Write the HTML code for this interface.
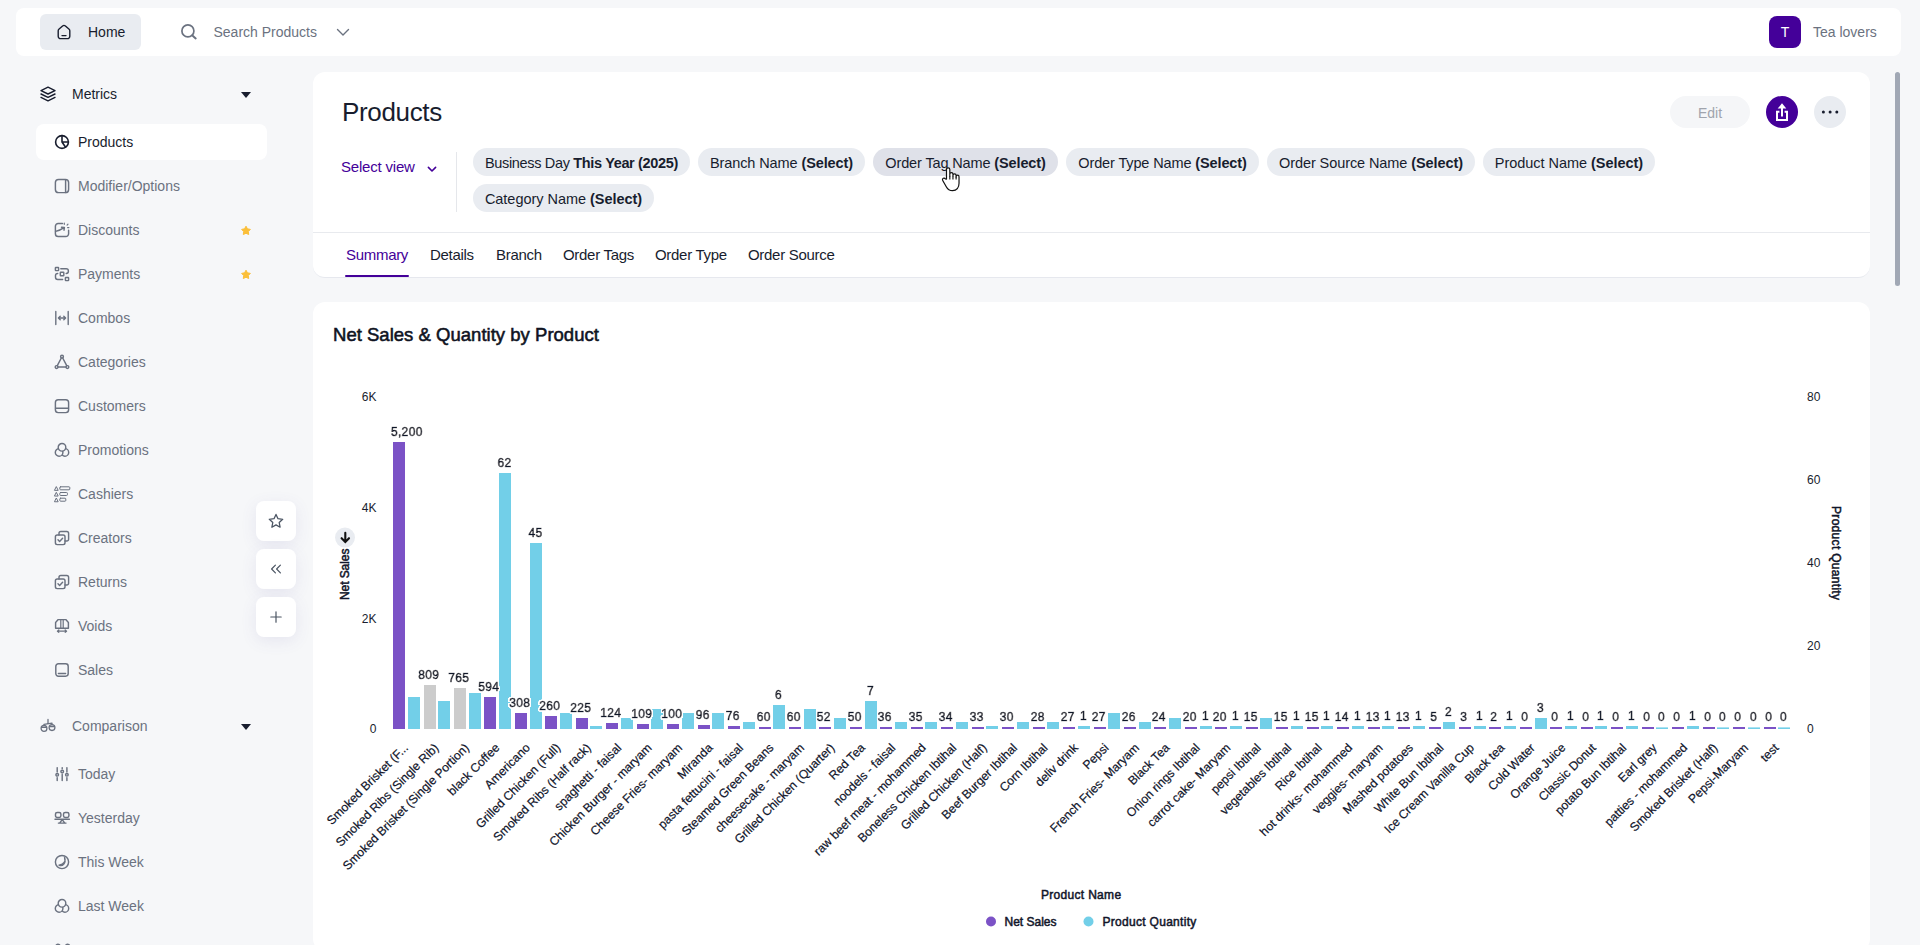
<!DOCTYPE html>
<html lang="en"><head><meta charset="utf-8"><title>Products</title>
<style>
*{box-sizing:border-box;margin:0;padding:0}
html,body{width:1920px;height:945px;overflow:hidden}
body{background:#f6f7f9;font-family:"Liberation Sans",Arial,sans-serif;color:#181d2e;position:relative;font-size:14px}
.abs{position:absolute}
svg{display:block;overflow:visible}
/* top bar */
#topbar{position:absolute;left:16px;top:8px;width:1885px;height:48px;background:#fff;border-radius:8px}
#home{position:absolute;left:24px;top:6px;width:101px;height:36px;background:#e9ecf1;border-radius:6px}
#home svg{position:absolute;left:16px;top:10px}
#home span{position:absolute;left:48px;top:0;line-height:36px;font-size:14px;color:#181d2e}
#search-ic{position:absolute;left:164px;top:15px}
#search-tx{position:absolute;left:197.500px;top:0;line-height:48px;font-size:14px;color:#6b7280}
#search-ch{position:absolute;left:320px;top:19.700px}
#avatar{position:absolute;left:1753px;top:8px;width:32px;height:32px;border-radius:8px;background:#440099;color:#fff;font-size:14px;line-height:32px;text-align:center}
#uname{position:absolute;left:1797px;top:0;line-height:48px;font-size:14px;color:#6b7280}
/* sidebar */
.sec{position:absolute;left:36px;width:231px;height:36px}
.sec svg.ic{position:absolute;left:4px;top:10px}
.sec span{position:absolute;left:36px;top:0;line-height:36px;font-size:14px}
.sec i.caret{position:absolute;left:205px;top:16px;width:0;height:0;border-left:5px solid transparent;border-right:5px solid transparent;border-top:6px solid #181d2e}
.item{position:absolute;left:36px;width:231px;height:36px;border-radius:8px;color:#6b7280}
.item.active{background:#fff;color:#181d2e}
.item svg.ic{position:absolute;left:18px;top:10px}
.item span{position:absolute;left:42px;top:0;line-height:36px;font-size:14px}
.item svg.star{position:absolute;left:204px;top:12px}
.fbtn{position:absolute;left:256px;width:40px;height:40px;border-radius:8px;background:#fff;box-shadow:0 4px 16px rgba(90,80,160,.10)}
.fbtn svg{position:absolute;left:12px;top:12px}
/* cards */
#card1{position:absolute;left:313px;top:72px;width:1557px;height:205.500px;background:#fff;border-radius:12px;overflow:hidden;border-bottom:1px solid #e6e8ee}
#card2{position:absolute;left:313px;top:302px;width:1557px;height:649px;background:#fff;border-radius:12px}
#ptitle{font-weight:normal;position:absolute;left:29px;top:22px;font-size:26px;line-height:36px;color:#181d2e;letter-spacing:-.35px}
#edit{padding-top:1px;position:absolute;left:1357px;top:24px;width:80px;height:32px;border-radius:16px;background:#f5f6f8;color:#a0a4ad;font-size:14px;line-height:32px;text-align:center}
#share{position:absolute;left:1453px;top:24px;width:32px;height:32px;border-radius:16px;background:#440099}
#share svg{position:absolute;left:0;top:0}
#more{position:absolute;left:1501px;top:24px;width:32px;height:32px;border-radius:16px;background:#e9ecf1}
#more i{position:absolute;top:14.500px;width:2.800px;height:2.800px;border-radius:50%;background:#181d2e}
#selview{position:absolute;left:28px;top:84px;font-size:15px;line-height:22px;color:#440099;letter-spacing:-.2px}
#selview-ch{position:absolute;left:114px;top:93.500px}
#vdiv{position:absolute;left:143px;top:80px;width:1px;height:60px;background:#e5e7eb}
.chip{position:absolute;padding-top:1px;height:28px;border-radius:14px;background:#e9ecf1;font-size:14.5px;line-height:28px;text-align:center;color:#181d2e;white-space:nowrap;letter-spacing:0}
.chip b{font-weight:bold;-webkit-text-stroke:0}
.chip.hov{background:#dfe1e9}
#hdiv{position:absolute;left:0;top:160px;width:1557px;height:1px;background:#e8eaee}
.tab{position:absolute;top:172px;font-size:15px;line-height:22px;color:#181d2e;white-space:nowrap;letter-spacing:-.3px}
.tab.on{color:#440099}
#tabline{position:absolute;left:32px;top:202.500px;width:64px;height:2.500px;background:#440099;border-radius:1px}
#scroll{position:absolute;left:1895px;top:72px;width:5px;height:214px;border-radius:3px;background:#a1a8b5}
#ctitle{position:absolute;left:20px;top:21px;font-size:18.500px;line-height:24px;font-weight:normal;color:#0f1322;-webkit-text-stroke:.55px #0f1322;letter-spacing:.02px;white-space:nowrap}
#chart{position:absolute;left:0;top:0}
#cursor{position:absolute;left:939.800px;top:166.100px}

</style></head>
<body>
<div id="topbar">
  <div id="home"><svg class="" width="16" height="16" viewBox="0 0 16 16" fill="none" stroke="#181d2e" stroke-width="1.4" stroke-linecap="round" stroke-linejoin="round"><path d="M2.200 6.800c0-.8.300-1.300.900-1.800L6.600 2c.800-.7 2-.7 2.800 0l3.500 3c.6.500.9 1 .9 1.800v5.400a2.400 2.400 0 0 1-2.400 2.400H4.600a2.400 2.400 0 0 1-2.400-2.400zM6 11.600h4"/></svg><span>Home</span></div>
  <div id="search-ic"><svg class="" width="18" height="18" viewBox="0 0 18 18" fill="none" stroke="#6b7280" stroke-width="1.7" stroke-linecap="round" stroke-linejoin="round"><circle cx="7.900" cy="7.900" r="6"/><path d="M12.400 12.400l3.300 3" stroke-width="2"/></svg></div>
  <div id="search-tx">Search Products</div>
  <div id="search-ch"><svg class="" width="14" height="9" viewBox="0 0 14 9" fill="none" stroke="#6b7280" stroke-width="1.4" stroke-linecap="round" stroke-linejoin="round"><path d="M1.500 1.500L7 7l5.500-5.500"/></svg></div>
  <div id="avatar">T</div>
  <div id="uname">Tea lovers</div>
</div>
<nav id="sidebar">
<div class="sec" style="top:76px;color:#181d2e"><svg class="ic" width="16" height="16" viewBox="0 0 16 16" fill="none" stroke="#181d2e" stroke-width="1.4" stroke-linecap="round" stroke-linejoin="round"><path d="M8 1.200L15 4.600 8 8 1 4.600z"/><path d="M1 8l7 3.400L15 8M1 11.400l7 3.400 7-3.400"/></svg><span>Metrics</span><i class="caret"></i></div>
<div class="sec" style="top:708px;color:#6b7280"><svg class="ic" width="16" height="16" viewBox="0 0 16 16" fill="none" stroke="#6b7280" stroke-width="1.3" stroke-linecap="round" stroke-linejoin="round"><path d="M8 1.400v4.300M4 6.300l8-1.100M4 6.300v1.200M12 5.200v1.400"/><circle cx="4" cy="10.400" r="2.900"/><circle cx="12" cy="9.600" r="2.900"/><path d="M1.600 9.300h4.800M9.600 8.500h4.800"/></svg><span>Comparison</span><i class="caret"></i></div>
<div class="item active" style="top:124px"><svg class="ic" width="16" height="16" viewBox="0 0 16 16" fill="none" stroke="#181d2e" stroke-width="1.6" stroke-linecap="round" stroke-linejoin="round"><circle cx="8" cy="8" r="6.4"/><path d="M8 1.6V8H14.4M8 8l3.6 5.2"/></svg><span>Products</span></div>
<div class="item" style="top:168px"><svg class="ic" width="16" height="16" viewBox="0 0 16 16" fill="none" stroke="#6b7280" stroke-width="1.45" stroke-linecap="round" stroke-linejoin="round"><rect x="1.400" y="1.400" width="13.200" height="13.200" rx="3.200"/><path d="M11.600 1.600v12.800"/></svg><span>Modifier/Options</span></div>
<div class="item" style="top:212px"><svg class="ic" width="16" height="16" viewBox="0 0 16 16" fill="none" stroke="#6b7280" stroke-width="1.45" stroke-linecap="round" stroke-linejoin="round"><path d="M8.500 1.500H4.200A2.800 2.800 0 0 0 1.400 4.300v7.400a2.800 2.800 0 0 0 2.800 2.800h7.600a2.800 2.800 0 0 0 2.800-2.800V8.300"/><path d="M1.600 9.400C4.500 8.800 7.400 7.600 10 5.700M7.500 5.200l2.900.200-.400 2.800"/><path d="M10.300 1v1.300M14 2.100l-.900 1M14.900 5.600h-1.300" stroke-width="1.200"/></svg><span>Discounts</span><svg class="star" width="12" height="12" viewBox="0 0 12 12"><path d="M6.00 2.20L7.44 4.82L10.37 5.38L8.33 7.56L8.70 10.52L6.00 9.25L3.30 10.52L3.67 7.56L1.63 5.38L4.56 4.82z" fill="#fbbf3a" stroke="#fbbf3a" stroke-width="1" stroke-linejoin="round"/></svg></div>
<div class="item" style="top:256px"><svg class="ic" width="16" height="16" viewBox="0 0 16 16" fill="none" stroke="#6b7280" stroke-width="1.45" stroke-linecap="round" stroke-linejoin="round"><rect x="1.400" y="1.400" width="3.200" height="3.200" rx=".5"/><rect x="11.400" y="11.400" width="3.200" height="3.200" rx=".5"/><rect x="6.300" y="6.300" width="3.500" height="3.500" rx=".5"/><path d="M6.800 2.700h5.400a2.200 2.200 0 0 1 2.200 2.200v.300a2.200 2.200 0 0 1-2.200 2.200M3.700 7.400a2.200 2.200 0 0 0-2.200 2.200v1.600a2.200 2.200 0 0 0 2.200 2.200h4.900"/></svg><span>Payments</span><svg class="star" width="12" height="12" viewBox="0 0 12 12"><path d="M6.00 2.20L7.44 4.82L10.37 5.38L8.33 7.56L8.70 10.52L6.00 9.25L3.30 10.52L3.67 7.56L1.63 5.38L4.56 4.82z" fill="#fbbf3a" stroke="#fbbf3a" stroke-width="1" stroke-linejoin="round"/></svg></div>
<div class="item" style="top:300px"><svg class="ic" width="16" height="16" viewBox="0 0 16 16" fill="none" stroke="#6b7280" stroke-width="1.45" stroke-linecap="round" stroke-linejoin="round"><path d="M1.800 1.400v13.200M14.200 1.400v13.200M4.600 8h6.800M6.200 6.200L4.400 8l1.800 1.800M9.800 6.200L11.600 8 9.800 9.800" stroke-width="1.400"/></svg><span>Combos</span></div>
<div class="item" style="top:344px"><svg class="ic" width="16" height="16" viewBox="0 0 16 16" fill="none" stroke="#6b7280" stroke-width="1.45" stroke-linecap="round" stroke-linejoin="round"><circle cx="8" cy="2.700" r="1.400"/><circle cx="2.600" cy="13" r="1.400"/><circle cx="13.400" cy="13" r="1.400"/><path d="M7.300 4L3.300 11.700M8.700 4l4 7.700M4 13h8"/></svg><span>Categories</span></div>
<div class="item" style="top:388px"><svg class="ic" width="16" height="16" viewBox="0 0 16 16" fill="none" stroke="#6b7280" stroke-width="1.45" stroke-linecap="round" stroke-linejoin="round"><rect x="1.400" y="1.800" width="13.200" height="12.800" rx="2.800"/><path d="M1.600 10.200h12.800"/></svg><span>Customers</span></div>
<div class="item" style="top:432px"><svg class="ic" width="16" height="16" viewBox="0 0 16 16" fill="none" stroke="#6b7280" stroke-width="1.45" stroke-linecap="round" stroke-linejoin="round"><g fill="#f6f7f9"><circle cx="10.900" cy="10.400" r="3.800"/><circle cx="5.100" cy="10.400" r="3.800"/><circle cx="8" cy="5.300" r="3.800"/></g></svg><span>Promotions</span></div>
<div class="item" style="top:476px"><svg class="ic" width="16" height="16" viewBox="0 0 16 16" fill="none" stroke="#6b7280" stroke-width="1.45" stroke-linecap="round" stroke-linejoin="round"><g stroke-width="1"><rect x="5.800" y=".800" width="10" height="3" rx=".8"/><rect x="5.800" y="6.500" width="7.600" height="3" rx=".8"/><rect x="5.800" y="12.200" width="6" height="3" rx=".8"/><path d="M.600 4l1.700-3.400L4 4zM.600 9.700l1.700-3.400L4 9.700zM.600 15.400l1.700-3.400L4 15.400z"/></g></svg><span>Cashiers</span></div>
<div class="item" style="top:520px"><svg class="ic" width="16" height="16" viewBox="0 0 16 16" fill="none" stroke="#6b7280" stroke-width="1.45" stroke-linecap="round" stroke-linejoin="round"><rect x="1.400" y="5" width="9.600" height="9.600" rx="1.800"/><path d="M5 5V3.200A1.800 1.800 0 0 1 6.800 1.400h6A1.800 1.800 0 0 1 14.600 3.200v6A1.800 1.800 0 0 1 12.800 11H11M4 9.800l1.600 1.600 3-3.200"/></svg><span>Creators</span></div>
<div class="item" style="top:564px"><svg class="ic" width="16" height="16" viewBox="0 0 16 16" fill="none" stroke="#6b7280" stroke-width="1.45" stroke-linecap="round" stroke-linejoin="round"><rect x="1.400" y="5" width="9.600" height="9.600" rx="1.800"/><path d="M5 5V3.200A1.800 1.800 0 0 1 6.800 1.400h6A1.800 1.800 0 0 1 14.600 3.200v6A1.800 1.800 0 0 1 12.800 11H11M4 9.800l1.600 1.600 3-3.200"/></svg><span>Returns</span></div>
<div class="item" style="top:608px"><svg class="ic" width="16" height="16" viewBox="0 0 16 16" fill="none" stroke="#6b7280" stroke-width="1.45" stroke-linecap="round" stroke-linejoin="round"><path d="M1.600 10.200V4.400l2.600-2.800h7.600l2.600 2.800v5.800z"/><path d="M6.800 1.800v8.200M9.200 1.800v8.200M3.400 13.200h9.200M4.800 12l-1.400 1.200 1.400 1.200M11.200 12l1.400 1.200-1.400 1.200" stroke-width="1.200"/></svg><span>Voids</span></div>
<div class="item" style="top:652px"><svg class="ic" width="16" height="16" viewBox="0 0 16 16" fill="none" stroke="#6b7280" stroke-width="1.45" stroke-linecap="round" stroke-linejoin="round"><rect x="1.800" y="1.800" width="12.400" height="12.400" rx="2.600"/><path d="M4.400 11.400h7.200"/></svg><span>Sales</span></div>
<div class="item" style="top:756px"><svg class="ic" width="16" height="16" viewBox="0 0 16 16" fill="none" stroke="#6b7280" stroke-width="1.45" stroke-linecap="round" stroke-linejoin="round"><path d="M3.200 1.600v4.400M3.200 11.600v2.800M8.200 1.600v1.200M8.200 8.400v6M12.900 1.600v4.400M12.900 11.600v2.800"/><circle cx="3.200" cy="8.800" r="1.300"/><circle cx="8.200" cy="5.600" r="1.300"/><circle cx="12.900" cy="8.800" r="1.300"/></svg><span>Today</span></div>
<div class="item" style="top:800px"><svg class="ic" width="16" height="16" viewBox="0 0 16 16" fill="none" stroke="#6b7280" stroke-width="1.45" stroke-linecap="round" stroke-linejoin="round"><rect x="1.500" y="2.400" width="5.400" height="5" rx="1.700"/><rect x="9.500" y="2.400" width="5.400" height="5" rx="1.700"/><path d="M1 9.300h14.400M8.200 9.600l-2.600 3.500h5.200zM4.400 13.100h7.600"/></svg><span>Yesterday</span></div>
<div class="item" style="top:844px"><svg class="ic" width="16" height="16" viewBox="0 0 16 16" fill="none" stroke="#6b7280" stroke-width="1.45" stroke-linecap="round" stroke-linejoin="round"><circle cx="8" cy="8" r="6.600"/><path d="M10.600 3.800c1.200 2.600.2 6.400-5.600 7.400 3.600 1.600 7.400-2.200 5.600-7.400z"/></svg><span>This Week</span></div>
<div class="item" style="top:888px"><svg class="ic" width="16" height="16" viewBox="0 0 16 16" fill="none" stroke="#6b7280" stroke-width="1.45" stroke-linecap="round" stroke-linejoin="round"><g fill="#f6f7f9"><circle cx="10.900" cy="10.400" r="3.800"/><circle cx="5.100" cy="10.400" r="3.800"/><circle cx="8" cy="5.300" r="3.800"/></g></svg><span>Last Week</span></div>
<div class="item" style="top:933px"><svg class="ic" width="16" height="16" viewBox="0 0 16 16" fill="none" stroke="#6b7280" stroke-width="1.45" stroke-linecap="round" stroke-linejoin="round"><circle cx="4" cy="3.200" r="2"/><circle cx="13.600" cy="3.200" r="2"/><path d="M6 3.200h5.600M4 5.200v6M13.600 5.200v6"/></svg><span style="top:8px"></span></div>
</nav>
<div class="fbtn" style="top:501px"><svg class="" width="16" height="16" viewBox="0 0 16 16" fill="none" stroke="#4b5563" stroke-width="1.3" stroke-linecap="round" stroke-linejoin="round"><path d="M8 1.400l2 4.300 4.700.6-3.500 3.200.9 4.700L8 11.900l-4.100 2.300.9-4.700L1.300 6.300l4.700-.6z"/></svg></div>
<div class="fbtn" style="top:549px"><svg class="" width="16" height="16" viewBox="0 0 16 16" fill="none" stroke="#4b5563" stroke-width="1.2" stroke-linecap="round" stroke-linejoin="round"><path d="M7.400 4.200L3.600 8l3.800 3.800M12.400 4.200L8.600 8l3.800 3.800"/></svg></div>
<div class="fbtn" style="top:597px"><svg class="" width="16" height="16" viewBox="0 0 16 16" fill="none" stroke="#4b5563" stroke-width="1.2" stroke-linecap="round" stroke-linejoin="round"><path d="M8 2.800v10.400M2.800 8h10.400"/></svg></div>
<section id="card1">
  <h1 id="ptitle">Products</h1>
  <div id="edit">Edit</div>
  <div id="share"><svg width="32" height="32" viewBox="0 0 32 32" fill="none" stroke="#fff" stroke-width="2"><path d="M13.400 15.800H11v8.200h10v-8.200h-2.400M16 20.500v-9" stroke-linejoin="miter"/><path d="M16 7.200l4.300 5.400h-8.600z" fill="#fff" stroke="none"/></svg></div>
  <div id="more"><svg width="32" height="32" viewBox="0 0 32 32"><circle cx="9.400" cy="15.900" r="1.500" fill="#181d2e"/><circle cx="16.100" cy="15.900" r="1.500" fill="#181d2e"/><circle cx="22.800" cy="15.900" r="1.500" fill="#181d2e"/></svg></div>
  <div id="selview">Select view</div>
  <div id="selview-ch"><svg class="" width="10" height="7" viewBox="0 0 10 7" fill="none" stroke="#440099" stroke-width="1.6" stroke-linecap="round" stroke-linejoin="round"><path d="M1.400 1.400L5 5l3.600-3.600"/></svg></div>
  <div id="vdiv"></div>
  <div class="chip" style="left:160px;top:76px;width:217px;letter-spacing:-0.341px">Business Day <b>This Year (2025)</b></div>
  <div class="chip" style="left:385px;top:76px;width:167px;letter-spacing:-0.105px">Branch Name <b>(Select)</b></div>
  <div class="chip hov" style="left:560px;top:76px;width:185px;letter-spacing:-0.13px">Order Tag Name <b>(Select)</b></div>
  <div class="chip" style="left:753px;top:76px;width:193px;letter-spacing:-0.125px">Order Type Name <b>(Select)</b></div>
  <div class="chip" style="left:954px;top:76px;width:208px;letter-spacing:-0.085px">Order Source Name <b>(Select)</b></div>
  <div class="chip" style="left:1170px;top:76px;width:172px;letter-spacing:-0.038px">Product Name <b>(Select)</b></div>
  <div class="chip" style="left:160px;top:112px;width:181px;letter-spacing:-0.032px">Category Name <b>(Select)</b></div>
  <div id="hdiv"></div>
  <div class="tab on" style="left:33px">Summary</div>
  <div class="tab" style="left:117px">Details</div>
  <div class="tab" style="left:183px">Branch</div>
  <div class="tab" style="left:250px">Order Tags</div>
  <div class="tab" style="left:342px">Order Type</div>
  <div class="tab" style="left:435px">Order Source</div>
  <div id="tabline"></div>
</section>
<div id="scroll"></div>
<section id="card2">
  <h2 id="ctitle">Net Sales &amp; Quantity by Product</h2>
  <svg id="chart" width="1557" height="660" viewBox="313 302 1557 660" font-family="Liberation Sans, Arial, sans-serif" font-size="12" fill="#181d2e">
<text x="376.500" y="733.3" text-anchor="end">0</text>
<text x="376.500" y="622.63" text-anchor="end">2K</text>
<text x="376.500" y="511.97" text-anchor="end">4K</text>
<text x="376.500" y="401.3" text-anchor="end">6K</text>
<text x="1807" y="733.3">0</text>
<text x="1807" y="650.3">20</text>
<text x="1807" y="567.3">40</text>
<text x="1807" y="484.3">60</text>
<text x="1807" y="401.3">80</text>
<g><rect x="393" y="442" width="12" height="287" fill="#7b52c6"/><rect x="408" y="697" width="12" height="32" fill="#72cfe8"/><rect x="424" y="685" width="12" height="44" fill="#cccccc"/><rect x="438" y="701" width="12" height="28" fill="#72cfe8"/><rect x="454" y="688" width="12" height="41" fill="#cccccc"/><rect x="469" y="693" width="12" height="36" fill="#72cfe8"/><rect x="484" y="697" width="12" height="32" fill="#7b52c6"/><rect x="499" y="473" width="12" height="256" fill="#72cfe8"/><rect x="515" y="713" width="12" height="16" fill="#7b52c6"/><rect x="530" y="543" width="12" height="186" fill="#72cfe8"/><rect x="545" y="716" width="12" height="13" fill="#7b52c6"/><rect x="560" y="713" width="12" height="16" fill="#72cfe8"/><rect x="576" y="718" width="12" height="11" fill="#7b52c6"/><rect x="590" y="726" width="12" height="3" fill="#72cfe8"/><rect x="606" y="723" width="12" height="6" fill="#7b52c6"/><rect x="621" y="718" width="12" height="11" fill="#72cfe8"/><rect x="637" y="724" width="12" height="5" fill="#7b52c6"/><rect x="651" y="709" width="12" height="20" fill="#72cfe8"/><rect x="667" y="724" width="12" height="5" fill="#7b52c6"/><rect x="682" y="713" width="12" height="16" fill="#72cfe8"/><rect x="698" y="725" width="12" height="4" fill="#7b52c6"/><rect x="712" y="713" width="12" height="16" fill="#72cfe8"/><rect x="728" y="726" width="12" height="3" fill="#7b52c6"/><rect x="743" y="722" width="12" height="7" fill="#72cfe8"/><rect x="759" y="727" width="12" height="2" fill="#7b52c6"/><rect x="773" y="705" width="12" height="24" fill="#72cfe8"/><rect x="789" y="727" width="12" height="2" fill="#7b52c6"/><rect x="804" y="709" width="12" height="20" fill="#72cfe8"/><rect x="819" y="727" width="12" height="2" fill="#7b52c6"/><rect x="834" y="718" width="12" height="11" fill="#72cfe8"/><rect x="850" y="727" width="12" height="2" fill="#7b52c6"/><rect x="865" y="701" width="12" height="28" fill="#72cfe8"/><rect x="880" y="727" width="12" height="2" fill="#7b52c6"/><rect x="895" y="722" width="12" height="7" fill="#72cfe8"/><rect x="911" y="727" width="12" height="2" fill="#7b52c6"/><rect x="925" y="722" width="12" height="7" fill="#72cfe8"/><rect x="941" y="727" width="12" height="2" fill="#7b52c6"/><rect x="956" y="722" width="12" height="7" fill="#72cfe8"/><rect x="972" y="727" width="12" height="2" fill="#7b52c6"/><rect x="986" y="726" width="12" height="3" fill="#72cfe8"/><rect x="1002" y="727" width="12" height="2" fill="#7b52c6"/><rect x="1017" y="722" width="12" height="7" fill="#72cfe8"/><rect x="1033" y="727" width="12" height="2" fill="#7b52c6"/><rect x="1047" y="722" width="12" height="7" fill="#72cfe8"/><rect x="1063" y="727" width="12" height="2" fill="#7b52c6"/><rect x="1078" y="726" width="12" height="3" fill="#72cfe8"/><rect x="1094" y="727" width="12" height="2" fill="#7b52c6"/><rect x="1108" y="713" width="12" height="16" fill="#72cfe8"/><rect x="1124" y="727" width="12" height="2" fill="#7b52c6"/><rect x="1139" y="722" width="12" height="7" fill="#72cfe8"/><rect x="1154" y="727" width="12" height="2" fill="#7b52c6"/><rect x="1169" y="718" width="12" height="11" fill="#72cfe8"/><rect x="1185" y="727" width="12" height="2" fill="#7b52c6"/><rect x="1200" y="726" width="12" height="3" fill="#72cfe8"/><rect x="1215" y="727" width="12" height="2" fill="#7b52c6"/><rect x="1230" y="726" width="12" height="3" fill="#72cfe8"/><rect x="1246" y="727" width="12" height="2" fill="#7b52c6"/><rect x="1260" y="718" width="12" height="11" fill="#72cfe8"/><rect x="1276" y="727" width="12" height="2" fill="#7b52c6"/><rect x="1291" y="726" width="12" height="3" fill="#72cfe8"/><rect x="1307" y="727" width="12" height="2" fill="#7b52c6"/><rect x="1321" y="726" width="12" height="3" fill="#72cfe8"/><rect x="1337" y="727" width="12" height="2" fill="#7b52c6"/><rect x="1352" y="726" width="12" height="3" fill="#72cfe8"/><rect x="1368" y="727" width="12" height="2" fill="#7b52c6"/><rect x="1382" y="726" width="12" height="3" fill="#72cfe8"/><rect x="1398" y="727" width="12" height="2" fill="#7b52c6"/><rect x="1413" y="726" width="12" height="3" fill="#72cfe8"/><rect x="1429" y="727" width="12" height="2" fill="#7b52c6"/><rect x="1443" y="722" width="12" height="7" fill="#72cfe8"/><rect x="1459" y="727" width="12" height="2" fill="#7b52c6"/><rect x="1474" y="726" width="12" height="3" fill="#72cfe8"/><rect x="1489" y="727" width="12" height="2" fill="#7b52c6"/><rect x="1504" y="726" width="12" height="3" fill="#72cfe8"/><rect x="1520" y="727" width="12" height="2" fill="#7b52c6"/><rect x="1535" y="718" width="12" height="11" fill="#72cfe8"/><rect x="1550" y="727" width="12" height="2" fill="#7b52c6"/><rect x="1565" y="726" width="12" height="3" fill="#72cfe8"/><rect x="1581" y="727" width="12" height="2" fill="#7b52c6"/><rect x="1595" y="726" width="12" height="3" fill="#72cfe8"/><rect x="1611" y="727" width="12" height="2" fill="#7b52c6"/><rect x="1626" y="726" width="12" height="3" fill="#72cfe8"/><rect x="1642" y="727" width="12" height="2" fill="#7b52c6"/><rect x="1656" y="727.4" width="12" height="1.6" fill="#72cfe8"/><rect x="1672" y="727" width="12" height="2" fill="#7b52c6"/><rect x="1687" y="726" width="12" height="3" fill="#72cfe8"/><rect x="1703" y="727" width="12" height="2" fill="#7b52c6"/><rect x="1717" y="727.4" width="12" height="1.6" fill="#72cfe8"/><rect x="1733" y="727" width="12" height="2" fill="#7b52c6"/><rect x="1748" y="727.4" width="12" height="1.6" fill="#72cfe8"/><rect x="1764" y="727" width="12" height="2" fill="#7b52c6"/><rect x="1778" y="727.4" width="12" height="1.6" fill="#72cfe8"/></g>
<filter id="halo" x="-2%" y="-5%" width="104%" height="110%"><feMorphology in="SourceAlpha" operator="dilate" radius="1" result="d"/><feGaussianBlur in="d" stdDeviation=".6" result="b"/><feComponentTransfer in="b" result="t"><feFuncA type="linear" slope="6" intercept="-.6"/></feComponentTransfer><feFlood flood-color="#fff" result="f"/><feComposite in="f" in2="t" operator="in" result="halo"/><feMerge><feMergeNode in="halo"/><feMergeNode in="SourceGraphic"/></feMerge></filter>
<g text-anchor="middle" stroke="#10142a" fill="#10142a" stroke-width=".7" filter="url(#halo)" font-size="12" letter-spacing=".35"><text x="406.8" y="435.5">5,200</text><text x="428.8" y="678.5">809</text><text x="458.8" y="681.5">765</text><text x="488.8" y="690.5">594</text><text x="504.5" y="467">62</text><text x="519.8" y="706.5">308</text><text x="535.5" y="537">45</text><text x="549.8" y="709.5">260</text><text x="580.8" y="711.5">225</text><text x="610.8" y="716.5">124</text><text x="641.8" y="717.5">109</text><text x="671.8" y="717.5">100</text><text x="702.8" y="718.5">96</text><text x="732.8" y="719.5">76</text><text x="763.8" y="720.5">60</text><text x="778.5" y="699">6</text><text x="793.8" y="720.5">60</text><text x="823.8" y="720.5">52</text><text x="854.8" y="720.5">50</text><text x="870.5" y="695">7</text><text x="884.8" y="720.5">36</text><text x="915.8" y="720.5">35</text><text x="945.8" y="720.5">34</text><text x="976.8" y="720.5">33</text><text x="1006.8" y="720.5">30</text><text x="1037.8" y="720.5">28</text><text x="1067.8" y="720.5">27</text><text x="1083.5" y="720">1</text><text x="1098.8" y="720.5">27</text><text x="1128.8" y="720.5">26</text><text x="1158.8" y="720.5">24</text><text x="1189.8" y="720.5">20</text><text x="1205.5" y="720">1</text><text x="1219.8" y="720.5">20</text><text x="1235.5" y="720">1</text><text x="1250.8" y="720.5">15</text><text x="1280.8" y="720.5">15</text><text x="1296.5" y="720">1</text><text x="1311.8" y="720.5">15</text><text x="1326.5" y="720">1</text><text x="1341.8" y="720.5">14</text><text x="1357.5" y="720">1</text><text x="1372.8" y="720.5">13</text><text x="1387.5" y="720">1</text><text x="1402.8" y="720.5">13</text><text x="1418.5" y="720">1</text><text x="1433.8" y="720.5">5</text><text x="1448.5" y="716">2</text><text x="1463.8" y="720.5">3</text><text x="1479.5" y="720">1</text><text x="1493.8" y="720.5">2</text><text x="1509.5" y="720">1</text><text x="1524.8" y="720.5">0</text><text x="1540.5" y="712">3</text><text x="1554.8" y="720.5">0</text><text x="1570.5" y="720">1</text><text x="1585.8" y="720.5">0</text><text x="1600.5" y="720">1</text><text x="1615.8" y="720.5">0</text><text x="1631.5" y="720">1</text><text x="1646.8" y="720.5">0</text><text x="1661.5" y="721.4">0</text><text x="1676.8" y="720.5">0</text><text x="1692.5" y="720">1</text><text x="1707.8" y="720.5">0</text><text x="1722.5" y="721.4">0</text><text x="1737.8" y="720.5">0</text><text x="1753.5" y="721.4">0</text><text x="1768.8" y="720.5">0</text><text x="1783.5" y="721.4">0</text></g>
<g font-size="12.200" fill="#10142a" stroke="#10142a" stroke-width=".2"><text transform="translate(408.9,748.5) rotate(-45)" text-anchor="end">Smoked Brisket (F...</text><text transform="translate(439.36,748.5) rotate(-45)" text-anchor="end">Smoked Ribs (Single Rib)</text><text transform="translate(469.81,748.5) rotate(-45)" text-anchor="end">Smoked Brisket (Single Portion)</text><text transform="translate(500.27,748.5) rotate(-45)" text-anchor="end">black Coffee</text><text transform="translate(530.72,748.5) rotate(-45)" text-anchor="end">Americano</text><text transform="translate(561.17,748.5) rotate(-45)" text-anchor="end">Grilled Chicken (Full)</text><text transform="translate(591.63,748.5) rotate(-45)" text-anchor="end">Smoked Ribs (Half rack)</text><text transform="translate(622.09,748.5) rotate(-45)" text-anchor="end">spaghetti - faisal</text><text transform="translate(652.54,748.5) rotate(-45)" text-anchor="end">Chicken Burger - maryam</text><text transform="translate(682.99,748.5) rotate(-45)" text-anchor="end">Cheese Fries- maryam</text><text transform="translate(713.45,748.5) rotate(-45)" text-anchor="end">Miranda</text><text transform="translate(743.9,748.5) rotate(-45)" text-anchor="end">pasta fettucini - faisal</text><text transform="translate(774.36,748.5) rotate(-45)" text-anchor="end">Steamed Green Beans</text><text transform="translate(804.81,748.5) rotate(-45)" text-anchor="end">cheesecake - maryam</text><text transform="translate(835.27,748.5) rotate(-45)" text-anchor="end">Grilled Chicken (Quarter)</text><text transform="translate(865.72,748.5) rotate(-45)" text-anchor="end">Red Tea</text><text transform="translate(896.18,748.5) rotate(-45)" text-anchor="end">noodels - faisal</text><text transform="translate(926.63,748.5) rotate(-45)" text-anchor="end">raw beef meat - mohammed</text><text transform="translate(957.09,748.5) rotate(-45)" text-anchor="end">Boneless Chicken Ibtihal</text><text transform="translate(987.54,748.5) rotate(-45)" text-anchor="end">Grilled Chicken (Half)</text><text transform="translate(1018,748.5) rotate(-45)" text-anchor="end">Beef Burger Ibtihal</text><text transform="translate(1048.45,748.5) rotate(-45)" text-anchor="end">Corn Ibtihal</text><text transform="translate(1078.91,748.5) rotate(-45)" text-anchor="end">deliv drink</text><text transform="translate(1109.37,748.5) rotate(-45)" text-anchor="end">Pepsi</text><text transform="translate(1139.82,748.5) rotate(-45)" text-anchor="end">French Fries- Maryam</text><text transform="translate(1170.27,748.5) rotate(-45)" text-anchor="end">Black Tea</text><text transform="translate(1200.73,748.5) rotate(-45)" text-anchor="end">Onion rings Ibtihal</text><text transform="translate(1231.18,748.5) rotate(-45)" text-anchor="end">carrot cake- Maryam</text><text transform="translate(1261.64,748.5) rotate(-45)" text-anchor="end">pepsi Ibtihal</text><text transform="translate(1292.1,748.5) rotate(-45)" text-anchor="end">vegetables Ibtihal</text><text transform="translate(1322.55,748.5) rotate(-45)" text-anchor="end">Rice Ibtihal</text><text transform="translate(1353,748.5) rotate(-45)" text-anchor="end">hot drinks- mohammed</text><text transform="translate(1383.46,748.5) rotate(-45)" text-anchor="end">veggies- maryam</text><text transform="translate(1413.91,748.5) rotate(-45)" text-anchor="end">Mashed potatoes</text><text transform="translate(1444.37,748.5) rotate(-45)" text-anchor="end">White Bun Ibtihal</text><text transform="translate(1474.83,748.5) rotate(-45)" text-anchor="end">Ice Cream Vanilla Cup</text><text transform="translate(1505.28,748.5) rotate(-45)" text-anchor="end">Black tea</text><text transform="translate(1535.73,748.5) rotate(-45)" text-anchor="end">Cold Water</text><text transform="translate(1566.19,748.5) rotate(-45)" text-anchor="end">Orange Juice</text><text transform="translate(1596.64,748.5) rotate(-45)" text-anchor="end">Classic Donut</text><text transform="translate(1627.1,748.5) rotate(-45)" text-anchor="end">potato Bun Ibtihal</text><text transform="translate(1657.56,748.5) rotate(-45)" text-anchor="end">Earl grey</text><text transform="translate(1688.01,748.5) rotate(-45)" text-anchor="end">patties - mohammed</text><text transform="translate(1718.46,748.5) rotate(-45)" text-anchor="end">Smoked Brisket (Half)</text><text transform="translate(1748.92,748.5) rotate(-45)" text-anchor="end">Pepsi-Maryam</text><text transform="translate(1779.37,748.5) rotate(-45)" text-anchor="end">test</text></g>
<circle cx="345" cy="537.600" r="10" fill="#e9ecf1"/><path d="M345.300 532.800v8.800M341.600 538.200l3.700 3.800 3.700-3.800" fill="none" stroke="#111" stroke-width="2.100" stroke-linecap="round" stroke-linejoin="miter"/>
<text transform="translate(349.400,574.300) rotate(-90)" text-anchor="middle" textLength="51.500" stroke="#12162a" stroke-width=".5" fill="#12162a" font-size="12" lengthAdjust="spacing">Net Sales</text>
<text transform="translate(1832,553) rotate(90)" text-anchor="middle" textLength="94" stroke="#12162a" stroke-width=".5" fill="#12162a" font-size="12" lengthAdjust="spacing">Product Quantity</text>
<text x="1081" y="899" text-anchor="middle" textLength="80.200" stroke="#12162a" stroke-width=".5" fill="#12162a" font-size="12" lengthAdjust="spacing">Product Name</text>
<circle cx="991" cy="921.500" r="5" fill="#7b52c6"/><text x="1004.500" y="926" textLength="52" stroke="#12162a" stroke-width=".5" fill="#12162a" font-size="12" lengthAdjust="spacing">Net Sales</text>
<circle cx="1088.500" cy="921.500" r="5" fill="#72cfe8"/><text x="1102.500" y="926" textLength="93.800" stroke="#12162a" stroke-width=".5" fill="#12162a" font-size="12" lengthAdjust="spacing">Product Quantity</text>
</svg>
</section>
<div id="cursor"><svg width="23" height="27.200" viewBox="0 0 22 26"><path d="M6.200 12.600V3.400c0-1 .700-1.700 1.600-1.700s1.600.700 1.600 1.700v6.200l0-1.700c0-.900.700-1.500 1.500-1.500s1.500.600 1.500 1.500v1.900l0-.800c0-.900.700-1.500 1.500-1.500s1.500.600 1.500 1.500v1.600l0-.400c0-.800.600-1.400 1.400-1.400s1.400.600 1.400 1.400v6.400c0 4-2.200 7-6.200 7-3 0-4.600-1.200-6-3.800l-3.400-6c-.500-.900-.200-1.700.500-2.100.800-.400 1.600-.100 2.100.700z" fill="#fff" stroke="#111" stroke-width="1.150" stroke-linejoin="round"/><path d="M9.400 9.600v3.200M12.400 9.700v3.100M15.400 10.300v2.500" stroke="#111" stroke-width="1.100" stroke-linecap="butt" fill="none"/></svg></div>

</body></html>
